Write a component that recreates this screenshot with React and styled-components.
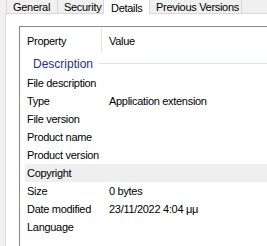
import React from 'react';
import styled, { createGlobalStyle } from 'styled-components';

const GlobalStyle = createGlobalStyle`
  html, body {
    margin: 0;
    padding: 0;
    background: #f0f0f0;
  }
  body {
    font-family: "Liberation Sans", Arial, sans-serif;
    font-size: 11px;
    letter-spacing: -0.3px;
    color: #000;
  }
`

const Window = styled.div`
  width: 267px;
  height: 246px;
  overflow: hidden;
  display: flex;
  flex-direction: column;
  background: #f0f0f0;
`

const TabStrip = styled.div`
  display: flex;
  margin-top: -6px;
  padding-left: 6px;
  height: 20px;
  position: relative;
  z-index: 1;
`

const Tab = styled.div`
  box-sizing: border-box;
  height: ${p => (p.$active ? '21px' : '20px')};
  width: ${p => p.$w}px;
  display: flex;
  align-items: center;
  padding: ${p => (p.$active ? '5px 0 0 7px' : '6px 0 0 6px')};
  border: 1px solid #d9d9d9;
  border-left: ${p => (p.$first ? '1px solid #d9d9d9' : 'none')};
  border-bottom: ${p => (p.$active ? 'none' : '1px solid #d9d9d9')};
  background: ${p => (p.$active ? '#fff' : '#f0f0f0')};
  white-space: nowrap;
`

const Panel = styled.div`
  margin-left: 5px;
  width: 400px;
  flex: 1;
  background: #fff;
  border-left: 1px solid #d9d9d9;
  border-top: 1px solid #d9d9d9;
  margin-top: -1px;
  padding: 12px 0 0 13px;
`

const ListView = styled.div`
  height: 100%;
  padding-top: 1px;
  background: #fff;
  border-left: 1px solid #828790;
  border-top: 1px solid #828790;
`

const Header = styled.div`
  display: grid;
  grid-template-columns: 82px 1fr;
  height: 25px;
`

const HeaderCell = styled.div`
  display: flex;
  align-items: center;
  padding-left: 7px;
  border-right: ${p => (p.$divider ? '1px solid #e5e5e5' : 'none')};
`

const Group = styled.div`
  display: flex;
  align-items: center;
  gap: 5px;
  height: 21px;
  padding-left: 13px;
  font-size: 12px;
  letter-spacing: 0;
  color: #1e3287;
`

const GroupLine = styled.div`
  flex: 1;
  height: 1px;
  background: #dde4ee;
`

const Row = styled.div`
  display: grid;
  grid-template-columns: 82px 1fr;
  height: 18px;
  align-items: center;
  margin-left: 5px;
  background: ${p => (p.$hover ? '#efefef' : 'transparent')};
`

const Cell = styled.div`
  padding-left: 2px;
  white-space: nowrap;
`

const tabs = [
  { label: 'General', w: 52 },
  { label: 'Security', w: 46 },
  { label: 'Details', w: 46, active: true },
  { label: 'Previous Versions', w: 92 },
]

const rows = [
  ['File description', ''],
  ['Type', 'Application extension'],
  ['File version', ''],
  ['Product name', ''],
  ['Product version', ''],
  ['Copyright', '', true],
  ['Size', '0 bytes'],
  ['Date modified', '23/11/2022 4:04 μμ'],
  ['Language', ''],
]

const App = () => {
  return (
    <Window>
      <GlobalStyle />
      <TabStrip>
        {tabs.map((t, i) => (
          <Tab key={t.label} $w={t.w} $active={t.active} $first={i === 0}>
            {t.label}
          </Tab>
        ))}
      </TabStrip>
      <Panel>
        <ListView>
          <Header>
            <HeaderCell $divider>Property</HeaderCell>
            <HeaderCell>Value</HeaderCell>
          </Header>
          <Group>
            Description
            <GroupLine />
          </Group>
          {rows.map(([k, v, hover]) => (
            <Row key={k} $hover={hover}>
              <Cell>{k}</Cell>
              <Cell>{v}</Cell>
            </Row>
          ))}
        </ListView>
      </Panel>
    </Window>
  );
}

export default App;
